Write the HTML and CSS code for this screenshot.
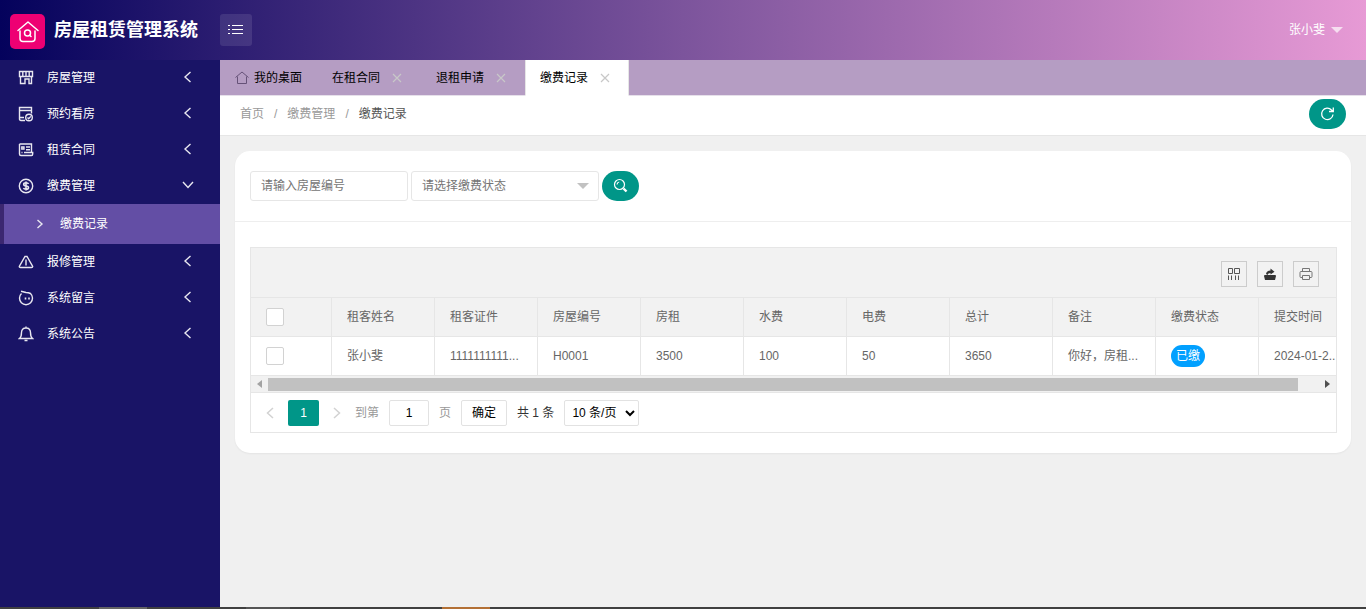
FILE: index.html
```html
<!DOCTYPE html>
<html lang="zh-CN">
<head>
    <meta charset="UTF-8">
    <title>房屋租赁管理系统</title>
    <link rel="stylesheet" href="styles.css">
</head>
<body>
    <header class="header">
        <div class="logo">
            <span class="logo-icon">
                <svg width="22" height="24" viewBox="0 0 22 24" fill="none" stroke="#fff" stroke-width="1.5" stroke-linecap="round" stroke-linejoin="round">
                    <path d="M1 10.500L11 2L21 10.500M3 11V18.500Q3 21.500 6 21.500H15Q18 21.500 18 18.500V11"/>
                    <circle cx="10.500" cy="13" r="3"/>
                    <path d="M12.700 15.200L14 16.500"/>
                </svg>
            </span>
            <h1>房屋租赁管理系统</h1>
        </div>
        <button class="menu-btn" type="button" aria-label="菜单">
            <svg width="16" height="12" viewBox="0 0 16 12" stroke="#fff" stroke-width="1"><path d="M0 1.500H2M4 1.500H15M0 5.500H2M4 5.500H15M0 9.500H2M4 9.500H15"/></svg>
        </button>
        <button class="user" type="button">张小斐 <i class="caret"></i></button>
    </header>

    <div class="wrap">
        <nav class="side">
            <a class="nav-item" href="#">
                <svg class="nav-icon" viewBox="0 0 16 16"><path d="M1.500 1.500H14.500V6.500H1.500ZM4.800 1.500V6.500M8 1.500V6.500M11.200 1.500V6.500M2.500 6.500V13.500H7V9H11V13.500H13.500V6.500"/></svg>
                <span>房屋管理</span>
                <svg class="arrow" viewBox="0 0 12 12"><path d="M8.500 1L3 6L8.500 11"/></svg>
            </a>
            <a class="nav-item" href="#">
                <svg class="nav-icon" viewBox="0 0 16 16"><path d="M7 14.500H3Q1.500 14.500 1.500 13V1.500H13.500V7.500M1.500 4.500H13.500M1.500 11.500H6"/><circle cx="11" cy="11.500" r="3.300"/><path d="M9.500 11.500L10.700 12.700L12.800 10.400"/></svg>
                <span>预约看房</span>
                <svg class="arrow" viewBox="0 0 12 12"><path d="M8.500 1L3 6L8.500 11"/></svg>
            </a>
            <a class="nav-item" href="#">
                <svg class="nav-icon" viewBox="0 0 16 16"><path d="M1.500 2H13.500V10.500M1.500 2V12Q1.500 13.500 3 13.500H13.500Q14.700 13.500 14.700 12V10.500H6M3.800 5H6V7H3.800ZM8 5H12M8 7.700H12M3.500 10.500H4.500"/></svg>
                <span>租赁合同</span>
                <svg class="arrow" viewBox="0 0 12 12"><path d="M8.500 1L3 6L8.500 11"/></svg>
            </a>
            <a class="nav-item" href="#">
                <svg class="nav-icon" viewBox="0 0 16 16"><circle cx="8" cy="8" r="6.700"/><path class="bold" d="M10.500 6Q10 4.700 8 4.700Q5.700 4.700 5.700 6.300Q5.700 7.700 8 8Q10.500 8.300 10.500 9.800Q10.500 11.300 8 11.300Q6 11.300 5.500 10M8 3.500V12.500"/></svg>
                <span>缴费管理</span>
                <svg class="arrow" viewBox="0 0 12 12"><path d="M1 3L6 8.500L11 3"/></svg>
            </a>
            <a class="nav-sub" href="#">
                <svg viewBox="0 0 8 10"><path d="M1.500 1L6 5L1.500 9"/></svg>
                <span>缴费记录</span>
            </a>
            <a class="nav-item" href="#">
                <svg class="nav-icon" viewBox="0 0 16 16"><path d="M7 2.500H9L14.700 12.500Q14.700 13.500 13.500 13.500H2.500Q1.300 13.500 1.300 12.500Z"/><path d="M8 5.500V11.500"/></svg>
                <span>报修管理</span>
                <svg class="arrow" viewBox="0 0 12 12"><path d="M8.500 1L3 6L8.500 11"/></svg>
            </a>
            <a class="nav-item" href="#">
                <svg class="nav-icon" viewBox="0 0 16 16"><path d="M3.500 3.500A6.500 6.500 0 1 0 12.500 3.500Q10.500 2.500 8 2.500L3 1.300"/><path class="bold" d="M7.500 7.500V9.500M11 7.500V9.500"/></svg>
                <span>系统留言</span>
                <svg class="arrow" viewBox="0 0 12 12"><path d="M8.500 1L3 6L8.500 11"/></svg>
            </a>
            <a class="nav-item" href="#">
                <svg class="nav-icon" viewBox="0 0 16 16"><path d="M1.500 12.500H14.500Q12.500 11 12.500 6.500Q12.500 2 8 2Q3.500 2 3.500 6.500Q3.500 11 1.500 12.500ZM8 0.500V2M6.500 14.500H9.500"/></svg>
                <span>系统公告</span>
                <svg class="arrow" viewBox="0 0 12 12"><path d="M8.500 1L3 6L8.500 11"/></svg>
            </a>
        </nav>

        <main class="main">
            <div class="tabs">
                <a class="tab home" href="#">
                    <svg width="14" height="14" viewBox="0 0 14 14" fill="none" stroke="#665278"><path d="M0.500 6.500L7 1L13.500 6.500M2.500 5.500V12.500H11.500V5.500"/></svg>
                    我的桌面
                </a>
                <a class="tab" href="#">在租合同 <svg class="close" viewBox="0 0 10 10"><path d="M1 1L9 9M9 1L1 9"/></svg></a>
                <a class="tab" href="#">退租申请 <svg class="close" viewBox="0 0 10 10"><path d="M1 1L9 9M9 1L1 9"/></svg></a>
                <a class="tab active" href="#">缴费记录 <svg class="close" viewBox="0 0 10 10"><path d="M1 1L9 9M9 1L1 9"/></svg></a>
            </div>

            <div class="crumb-bar">
                <div class="crumbs">
                    <a href="#">首页</a><span>/</span><a href="#">缴费管理</a><span>/</span><a class="current" href="#">缴费记录</a>
                </div>
                <button class="btn" type="button" aria-label="刷新">
                    <svg width="16" height="16" viewBox="0 0 16 16" fill="none" stroke="#fff" stroke-width="1.300"><path d="M13 8.500A5.700 5.700 0 1 1 11.500 4L13 5.500M13.300 1.500V5.500H9"/></svg>
                </button>
            </div>

            <section class="card">
                <form class="search">
                    <input class="field" type="text" placeholder="请输入房屋编号" aria-label="房屋编号">
                    <div class="select-box">
                        <select class="field" aria-label="缴费状态">
                            <option>请选择缴费状态</option>
                        </select>
                        <i class="caret"></i>
                    </div>
                    <button class="btn" type="button" aria-label="搜索">
                        <svg width="16" height="16" viewBox="0 0 16 16" fill="none" stroke="#fff" stroke-width="1.200"><circle cx="6.500" cy="6.500" r="5"/><path d="M4 6.500Q4.200 4.200 6.200 4"/><path stroke-width="2.400" d="M10.500 10.500L13.500 13.500"/></svg>
                    </button>
                </form>

                <div class="table-box">
                    <div class="toolbar">
                        <button type="button" aria-label="筛选列">
                            <svg width="14" height="14" viewBox="0 0 14 14" fill="none" stroke="#555"><path d="M1.500 1.500H5.500V6.500H1.500ZM7.500 1.500H12.500V6.500H7.500ZM1.500 8.500V13M4.500 8.500V13M8.500 8.500V13M11.500 8.500V13"/></svg>
                        </button>
                        <button type="button" aria-label="导出">
                            <svg width="14" height="14" viewBox="0 0 14 14" fill="#333"><path d="M1.500 8H12.500L13 9L12 13H2L1 9ZM3 7Q3.500 3.500 7.500 3.500V1.500L11.500 4.700L7.500 7.500V6Q5 6 4.500 8Z"/></svg>
                        </button>
                        <button type="button" aria-label="打印">
                            <svg width="14" height="14" viewBox="0 0 14 14" fill="none" stroke="#777"><path d="M3.500 4.500V1.500H10.500V4.500M3.500 10.500H2Q1 10.500 1 9.500V5.500Q1 4.500 2 4.500H12Q13 4.500 13 5.500V9.500Q13 10.500 12 10.500H10.500M3.500 8.500H10.500V12.500H3.500Z"/></svg>
                        </button>
                    </div>
                    <div class="table-scroll">
                        <table>
                            <thead>
                                <tr>
                                    <th class="check"><input type="checkbox" aria-label="全选"></th>
                                    <th>租客姓名</th>
                                    <th>租客证件</th>
                                    <th>房屋编号</th>
                                    <th>房租</th>
                                    <th>水费</th>
                                    <th>电费</th>
                                    <th>总计</th>
                                    <th>备注</th>
                                    <th>缴费状态</th>
                                    <th>提交时间</th>
                                </tr>
                            </thead>
                            <tbody>
                                <tr>
                                    <td class="check"><input type="checkbox" aria-label="选择"></td>
                                    <td>张小斐</td>
                                    <td>1111111111...</td>
                                    <td>H0001</td>
                                    <td>3500</td>
                                    <td>100</td>
                                    <td>50</td>
                                    <td>3650</td>
                                    <td>你好，房租...</td>
                                    <td><span class="badge">已缴</span></td>
                                    <td>2024-01-2...</td>
                                </tr>
                            </tbody>
                        </table>
                    </div>
                    <div class="scrollbar">
                        <svg viewBox="0 0 5 8" fill="#a3a3a3"><path d="M5 0V8L0 4Z"/></svg>
                        <div class="track"><div class="thumb"></div></div>
                        <svg viewBox="0 0 5 8" fill="#505050"><path d="M0 0V8L5 4Z"/></svg>
                    </div>
                    <div class="pager">
                        <button class="page-arrow" type="button" aria-label="上一页"><svg viewBox="0 0 8 12"><path d="M7 1L1.500 6L7 11"/></svg></button>
                        <button class="page-num" type="button">1</button>
                        <button class="page-arrow" type="button" aria-label="下一页"><svg viewBox="0 0 8 12"><path d="M1 1L6.500 6L1 11"/></svg></button>
                        <label for="page">到第</label>
                        <input id="page" type="text" value="1">
                        <span class="gray">页</span>
                        <button class="go" type="button">确定</button>
                        <span>共 1 条</span>
                        <select aria-label="每页条数"><option>10 条/页</option></select>
                    </div>
                </div>
            </section>
        </main>
    </div>

    <div class="bottom-strip"></div>
</body>
</html>
```

FILE: styles.css
```css
* {
    box-sizing: border-box;
}
body {
    margin: 0;
    min-height: 100vh;
    display: flex;
    flex-direction: column;
    font: 12px/24px "Liberation Sans", "Noto Sans CJK SC", sans-serif;
    color: #666;
    background-color: #f0f0f0;
}
a {
    color: inherit;
    text-decoration: none;
}
button, input, select {
    font: inherit;
    margin: 0;
}
button {
    padding: 0;
    cursor: pointer;
    display: flex;
    align-items: center;
    justify-content: center;
}
svg {
    flex: none;
}

/* header */
.header {
    height: 60px;
    display: flex;
    align-items: center;
    background: linear-gradient(to right, #04025c, #7c549c 50%, #e79ad5);
    color: #fff;
}
.logo {
    width: 220px;
    padding-left: 10px;
    display: flex;
    align-items: center;
    gap: 9px;
}
.logo-icon {
    width: 35px;
    height: 35px;
    margin-top: 3px;
    border-radius: 5px;
    background-color: #ee0073;
    display: flex;
    align-items: center;
    justify-content: center;
}
.logo h1 {
    margin: 0;
    font-size: 18px;
    font-weight: bold;
}
.menu-btn {
    width: 32px;
    height: 32px;
    border: none;
    border-radius: 3px;
    background-color: rgba(255, 255, 255, .1);
}
.user {
    margin-left: auto;
    margin-right: 23px;
    gap: 6px;
    border: none;
    background: none;
    color: #fff;
}
.caret {
    border: 6px solid transparent;
    border-top-color: #f6def0;
    border-bottom: none;
}

/* side menu */
.wrap {
    flex: 1;
    display: flex;
}
.side {
    width: 220px;
    flex: none;
    background-color: #191466;
    color: #fff;
}
.side svg {
    fill: none;
    stroke: #e8e7f0;
    stroke-width: 1.4;
}
.nav-item {
    height: 36px;
    padding: 0 26px 0 18px;
    display: flex;
    align-items: center;
    gap: 13px;
}
.nav-icon {
    width: 16px;
    height: 16px;
}
.side .bold {
    stroke-width: 1.6;
}
.arrow {
    width: 12px;
    height: 12px;
    margin-left: auto;
    margin-bottom: 2px;
}
.nav-sub {
    height: 40px;
    padding-left: 32px;
    border-left: 4px solid #3b2770;
    background-color: #634ea5;
    display: flex;
    align-items: center;
    gap: 16px;
}
.nav-sub svg {
    width: 8px;
    height: 10px;
}

/* tabs */
.main {
    flex: 1;
    min-width: 0;
}
.tabs {
    height: 36px;
    display: flex;
    background-color: #b59dc3;
    border-bottom: 1px solid #e6e0ea;
    color: #000;
}
.tab {
    height: 35px;
    padding: 0 19px 0 15px;
    display: flex;
    align-items: center;
    gap: 12px;
}
.tab.home {
    padding-right: 15px;
    gap: 5px;
}
.tab.active {
    height: 36px;
    background-color: #fff;
    border: 1px solid #e6e6e6;
    border-top: none;
    border-bottom-color: #fff;
    padding: 0 18px 0 14px;
}
.close {
    width: 10px;
    height: 10px;
    stroke: #c8c8c8;
    stroke-width: 1.2;
}
.crumb-bar {
    height: 40px;
    padding: 0 20px 3px;
    display: flex;
    align-items: center;
    justify-content: space-between;
    background-color: #fff;
    border-bottom: 1px solid #e6e6e6;
}
.crumbs {
    display: flex;
    color: #999;
}
.crumbs span {
    margin: 0 10px;
}
.crumbs .current {
    color: #555;
}
.btn {
    width: 37px;
    height: 30px;
    border: none;
    border-radius: 15px;
    background-color: #009688;
}

/* content */
.card {
    margin: 15px;
    padding-bottom: 20px;
    border-radius: 15px;
    background-color: #fff;
    box-shadow: 0 1px 2px rgba(0, 0, 0, .05);
}
.search {
    padding: 20px 15px;
    display: flex;
    gap: 3px;
    border-bottom: 1px solid #eee;
}
.field {
    width: 158px;
    height: 30px;
    padding: 0 10px;
    border: 1px solid #e6e6e6;
    border-radius: 3px;
    background-color: #fff;
    color: #757575;
}
.field::placeholder {
    color: #757575;
}
.select-box {
    position: relative;
    display: flex;
}
.select-box .field {
    width: 188px;
    appearance: none;
}
.select-box .caret {
    position: absolute;
    right: 10px;
    top: 12px;
    border-top-color: #c2c2c2;
}
.table-box {
    margin: 25px 14px 0 15px;
    border: 1px solid #e6e6e6;
}
.toolbar {
    height: 50px;
    padding: 2px 17px 0;
    display: flex;
    align-items: center;
    justify-content: flex-end;
    gap: 10px;
    background-color: #f2f2f2;
    border-bottom: 1px solid #e6e6e6;
}
.toolbar button {
    width: 26px;
    height: 26px;
    border: 1px solid #ccc;
    background: none;
}
.table-scroll {
    overflow: hidden;
}
table {
    width: 1111px;
    table-layout: fixed;
    border-collapse: separate;
    border-spacing: 0;
}
th, td {
    width: 103px;
    height: 39px;
    padding: 0 0 0 15px;
    border-right: 1px solid #e6e6e6;
    border-bottom: 1px solid #e6e6e6;
    font-weight: normal;
    text-align: left;
    white-space: nowrap;
}
th {
    background-color: #f2f2f2;
}
.check {
    width: 81px;
}
.check input {
    appearance: none;
    display: block;
    width: 18px;
    height: 18px;
    border: 1px solid #d2d2d2;
    border-radius: 2px;
    background-color: #fff;
}
.badge {
    display: inline-block;
    padding: 0 5px;
    line-height: 22px;
    border-radius: 11px;
    background-color: #01a0ff;
    color: #fff;
}
.scrollbar {
    height: 17px;
    padding: 0 6px;
    display: flex;
    align-items: center;
    gap: 6px;
    background-color: #f1f1f1;
    border-bottom: 1px solid #e6e6e6;
}
.scrollbar svg {
    width: 5px;
    height: 8px;
}
.track {
    flex: 1;
}
.thumb {
    width: 98%;
    height: 13px;
    background-color: #c1c1c1;
}
.pager {
    height: 39px;
    padding: 0 15px;
    display: flex;
    align-items: center;
    gap: 10px;
    color: #333;
}
.pager button, .pager input, .pager select {
    height: 26px;
    border: 1px solid #e2e2e2;
    border-radius: 2px;
    background-color: #fff;
    color: #000;
}
.pager .page-arrow {
    width: 8px;
    border: none;
}
.page-arrow svg {
    width: 8px;
    height: 12px;
    fill: none;
    stroke: #d2d2d2;
    stroke-width: 1.5;
}
.pager .page-num {
    width: 31px;
    margin: 0 4px;
    border: none;
    background-color: #009688;
    color: #fff;
}
.pager label, .pager .gray {
    color: #999;
}
.pager label {
    margin-left: 4px;
}
.pager input {
    width: 40px;
    text-align: center;
}
.pager .go {
    width: 46px;
}
.pager select {
    width: 75px;
    padding: 0 3px;
}

.bottom-strip {
    height: 2px;
    background: linear-gradient(to right, #404040 99px, #646464 99px, #646464 147px, #404040 147px, #404040 246px, #555 246px, #555 290px, #404040 290px, #404040 442px, #b37035 442px, #b37035 490px, #404040 490px);
}
```
